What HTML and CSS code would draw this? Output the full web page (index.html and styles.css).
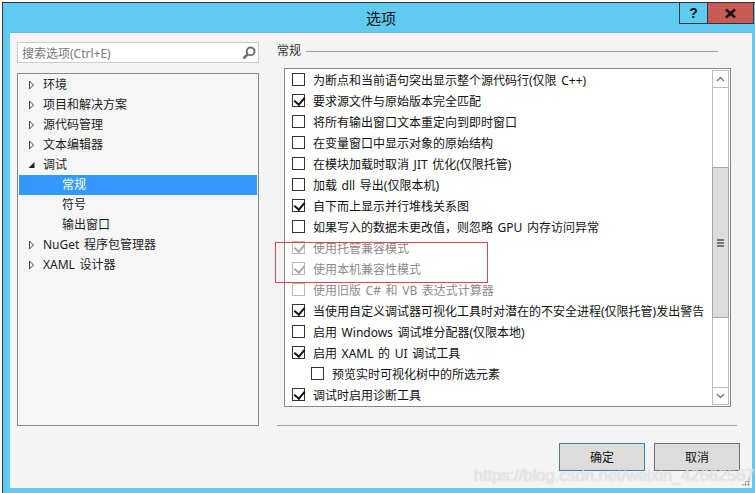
FILE: index.html
```html
<!DOCTYPE html>
<html lang="zh-CN">
<head>
<meta charset="utf-8">
<title>选项</title>
<link rel="stylesheet" href="styles.css">
</head>
<body>
<div class="window">
  <header class="titlebar">
    <div class="title">选项</div>
    <div class="controls">
      <div class="ctl help">?</div>
      <div class="ctl close"><svg width="13" height="11" viewBox="0 0 13 11"><path d="M2 1.5 L11 9.5 M11 1.5 L2 9.5" stroke="#111" stroke-width="2.6" fill="none"/></svg></div>
    </div>
  </header>
  <div class="body">
    <div class="main">
      <aside class="side">
        <div class="search">
          <span class="search-text">搜索选项(Ctrl+E)</span>
          <svg class="search-icon" width="14" height="14" viewBox="0 0 14 14"><circle cx="8.6" cy="5.4" r="3.9" fill="none" stroke="#6f6f6f" stroke-width="2"/><path d="M5.6 8.4 L1.5 12.5" stroke="#6f6f6f" stroke-width="2.6"/></svg>
        </div>
        <nav class="tree">
          <div class="node"><svg class="arrow" width="7" height="10" viewBox="0 0 7 10"><path d="M1.5 1 L5.5 5 L1.5 9 Z" fill="none" stroke="#444"/></svg>环境</div>
          <div class="node"><svg class="arrow" width="7" height="10" viewBox="0 0 7 10"><path d="M1.5 1 L5.5 5 L1.5 9 Z" fill="none" stroke="#444"/></svg>项目和解决方案</div>
          <div class="node"><svg class="arrow" width="7" height="10" viewBox="0 0 7 10"><path d="M1.5 1 L5.5 5 L1.5 9 Z" fill="none" stroke="#444"/></svg>源代码管理</div>
          <div class="node"><svg class="arrow" width="7" height="10" viewBox="0 0 7 10"><path d="M1.5 1 L5.5 5 L1.5 9 Z" fill="none" stroke="#444"/></svg>文本编辑器</div>
          <div class="node"><svg class="arrow" width="7" height="10" viewBox="0 0 7 10"><path d="M0.5 8 L6.5 8 L6.5 2 Z" fill="#222"/></svg>调试</div>
          <div class="node child selected">常规</div>
          <div class="node child">符号</div>
          <div class="node child">输出窗口</div>
          <div class="node"><svg class="arrow" width="7" height="10" viewBox="0 0 7 10"><path d="M1.5 1 L5.5 5 L1.5 9 Z" fill="none" stroke="#444"/></svg>NuGet 程序包管理器</div>
          <div class="node"><svg class="arrow" width="7" height="10" viewBox="0 0 7 10"><path d="M1.5 1 L5.5 5 L1.5 9 Z" fill="none" stroke="#444"/></svg>XAML 设计器</div>
        </nav>
      </aside>
      <section class="panel">
        <div class="heading"><span>常规</span><i class="rule"></i></div>
        <div class="options">
          <div class="list">
            <div class="row"><i class="box"></i>为断点和当前语句突出显示整个源代码行(仅限 C++)</div>
            <div class="row"><i class="box on"></i>要求源文件与原始版本完全匹配</div>
            <div class="row"><i class="box"></i>将所有输出窗口文本重定向到即时窗口</div>
            <div class="row"><i class="box"></i>在变量窗口中显示对象的原始结构</div>
            <div class="row"><i class="box"></i>在模块加载时取消 JIT 优化(仅限托管)</div>
            <div class="row"><i class="box"></i>加载 dll 导出(仅限本机)</div>
            <div class="row"><i class="box on"></i>自下而上显示并行堆栈关系图</div>
            <div class="row"><i class="box"></i>如果写入的数据未更改值，则忽略 GPU 内存访问异常</div>
            <div class="row off"><i class="box on"></i>使用托管兼容模式</div>
            <div class="row off"><i class="box on"></i>使用本机兼容性模式</div>
            <div class="row off"><i class="box"></i>使用旧版 C# 和 VB 表达式计算器</div>
            <div class="row"><i class="box on"></i>当使用自定义调试器可视化工具时对潜在的不安全进程(仅限托管)发出警告</div>
            <div class="row"><i class="box"></i>启用 Windows 调试堆分配器(仅限本地)</div>
            <div class="row"><i class="box on"></i>启用 XAML 的 UI 调试工具</div>
            <div class="row sub"><i class="box"></i>预览实时可视化树中的所选元素</div>
            <div class="row"><i class="box on"></i>调试时启用诊断工具</div>
          </div>
          <div class="scrollbar">
            <div class="sb-btn"><svg width="9" height="6" viewBox="0 0 9 6"><path d="M1 5 L4.5 1.5 L8 5" fill="none" stroke="#777" stroke-width="1.3"/></svg></div>
            <div class="sb-track">
              <div class="sb-thumb"><i></i><i></i><i></i></div>
            </div>
            <div class="sb-btn"><svg width="9" height="6" viewBox="0 0 9 6"><path d="M1 1 L4.5 4.5 L8 1" fill="none" stroke="#777" stroke-width="1.3"/></svg></div>
          </div>
        </div>
        <div class="footer-rule"></div>
      </section>
    </div>
    <footer class="footer">
      <button class="btn primary">确定</button>
      <button class="btn">取消</button>
    </footer>
    <div class="grip"></div>
  </div>
  <div class="redbox"></div>
  <div class="watermark">https://blog.csdn.net/weixin_42662567</div>
</div>
</body>
</html>
```

FILE: styles.css
```css
* { box-sizing: border-box; }
html, body { margin: 0; height: 100%; }
body {
  width: 755px;
  height: 493px;
  overflow: hidden;
  background: #fff;
  padding: 2px 0 0 2px;
  font-family: "Noto Sans", "Noto Sans CJK SC", sans-serif;
  font-size: 12px;
  word-spacing: 1.5px;
  color: #111;
}
.window {
  position: relative;
  width: 753px;
  height: 491px;
  background: #60cbf0;
  border-top: 1px solid #333;
  border-left: 1px solid #333;
  padding: 0 3px 5px 7px;
  display: flex;
  flex-direction: column;
}
.titlebar {
  height: 29px;
  flex: none;
  display: flex;
  justify-content: flex-end;
  position: relative;
}
.title {
  position: absolute;
  left: 0; right: 0; top: 5px;
  text-align: center;
  font-size: 15px;
  line-height: 20px;
}
.controls { display: flex; align-items: flex-start; margin-right: -2px; }
.ctl {
  height: 21px;
  border: 1px solid #333;
  border-top: 0;
  display: flex;
  align-items: center;
  justify-content: center;
}
.help { width: 28px; font: bold 14px "Liberation Sans", sans-serif; border-right: 0; }
.close { width: 47px; background: #c75b55; }
.body {
  position: relative;
  flex: 1;
  background: #f4f4f4;
  padding: 9px 7px 0 7px;
  display: flex;
  flex-direction: column;
  border-top: 1px solid #6fb4d6;
}
.main { display: flex; height: 384px; flex: none; }
.side { width: 242px; flex: none; display: flex; flex-direction: column; gap: 10px; }
.search {
  height: 21px;
  flex: none;
  background: #fff;
  border: 1px solid #c9cdd2;
  display: flex;
  align-items: center;
  justify-content: space-between;
  padding: 0 2px 0 4px;
  color: #777;
  font-size: 12px;
}
.search-icon { flex: none; }
.tree {
  flex: 1;
  background: #f6f6f6;
  border: 1px solid #85878c;
  padding: 1px;
}
.node {
  height: 20px;
  line-height: 20px;
  display: flex;
  align-items: center;
  padding-left: 9px;
  white-space: pre;
  color: #1c1c1c;
}
.arrow { margin-right: 8px; flex: none; }
.child { padding-left: 43px; }
.selected { background: #3399ff; color: #fff; }
.panel { flex: 1; margin-left: 18px; display: flex; flex-direction: column; min-width: 0; }
.heading {
  height: 16px;
  flex: none;
  display: flex;
  align-items: center;
  gap: 5px;
  color: #333;
}
.rule { flex: none; width: 412px; height: 1px; margin-top: 3px; background: #a0a0a0; }
.options {
  flex: none;
  margin: 10px 0 0 7px;
  width: 447px;
  height: 339px;
  background: #fff;
  border: 1px solid #85878c;
  display: flex;
}
.list { flex: 1; min-width: 0; }
.row {
  height: 21px;
  display: flex;
  align-items: center;
  padding-left: 7px;
  white-space: pre;
  color: #111;
}
.off { color: #8a8a8a; }
.sub { padding-left: 26px; }
.box {
  flex: none;
  width: 13px;
  height: 13px;
  margin-right: 8px;
  background: #fff;
  border: 1px solid #333;
  position: relative;
}
.off .box { border-color: #b8b8b8; }
.box.on::after {
  content: "";
  position: absolute;
  left: 3px;
  top: 0;
  width: 5px;
  height: 8px;
  border: solid #111;
  border-width: 0 2px 2px 0;
  transform: rotate(40deg);
}
.off .box.on::after { border-color: #a8a8a8; }
.scrollbar {
  width: 17px;
  flex: none;
  margin: 1px 1px 1px 0;
  display: flex;
  flex-direction: column;
  border: 1px solid #bdbdbd;
}
.sb-btn {
  height: 17px;
  flex: none;
  display: flex;
  align-items: center;
  justify-content: center;
}
.sb-btn:first-child { border-bottom: 1px solid #bdbdbd; }
.sb-btn:last-child { border-top: 1px solid #bdbdbd; }
.sb-track { flex: 1; padding-top: 79px; }
.sb-thumb {
  height: 151px;
  margin: 0 -1px;
  background: #dcdcdc;
  border: 1px solid #a6a6a6;
  display: flex;
  flex-direction: column;
  align-items: center;
  justify-content: center;
  gap: 1px;
}
.sb-thumb i { width: 7px; height: 2px; background: #777; }
.footer-rule { height: 1px; background: #a0a0a0; margin-top: auto; margin-bottom: 0; flex: none; width: 460px; }
.footer { display: flex; justify-content: flex-end; gap: 9px; margin-top: 17px; padding-right: 5px; }
.btn {
  width: 86px;
  height: 28px;
  padding: 0;
  background: #dcdcdc;
  border: 1px solid #707070;
  font: inherit;
  color: #111;
}
.primary { border-color: #3c7fb1; }
.grip {
  position: absolute;
  right: 2px; bottom: 2px;
  width: 9px; height: 9px;
  background: radial-gradient(circle, #a8a8a8 1px, transparent 1.2px) 0 0 / 3px 3px;
  clip-path: polygon(100% 0, 100% 100%, 0 100%);
}
.redbox {
  position: absolute;
  left: 272px; top: 239px;
  width: 213px; height: 41px;
  border: 1px solid #e4444c;
}
.watermark {
  position: absolute;
  left: 471px; top: 463px;
  font: 16.5px "Liberation Sans", sans-serif;
  word-spacing: 0;
  color: rgba(255,255,255,0.65);
  text-shadow: 0 0 1px rgba(140,140,140,.6);
  white-space: pre;
}
```
